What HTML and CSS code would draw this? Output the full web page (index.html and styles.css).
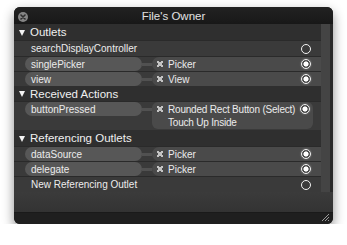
FILE: index.html
```html
<!DOCTYPE html>
<html lang="en">
<head>
    <meta charset="UTF-8">
    <title>File's Owner</title>
    <link rel="stylesheet" href="styles.css">
</head>
<body>
    <div class="window">
        <!-- title bar -->
        <div class="titlebar">
            <svg class="close" width="10" height="10" viewBox="0 0 10 10">
                <circle cx="5" cy="5" r="5" fill="#858585"/>
                <path d="M3 3 L7 7 M7 3 L3 7" stroke="#2e2e2e" stroke-width="1.6" stroke-linecap="round"/>
            </svg>
            <span class="title">File's Owner</span>
        </div>

        <div class="main">
            <div class="list">
                <div class="section first"><span class="tri"></span>Outlets</div>
                <div class="row tall">
                    <span class="name">searchDisplayController</span>
                    <span class="radio empty"></span>
                </div>
                <div class="row">
                    <span class="pill">singlePicker</span><span class="link"></span>
                    <span class="target"><span class="x"></span>Picker<span class="radio full"></span></span>
                </div>
                <div class="row">
                    <span class="pill">view</span><span class="link"></span>
                    <span class="target"><span class="x"></span>View<span class="radio full"></span></span>
                </div>

                <div class="section"><span class="tri"></span>Received Actions</div>
                <div class="row multi">
                    <span class="pill">buttonPressed</span><span class="link"></span>
                    <span class="target box">
                        <span class="x"></span>
                        <span class="lines">
                            <span>Rounded Rect Button (Select)</span>
                            <span>Touch Up Inside</span>
                        </span>
                        <span class="radio full"></span>
                    </span>
                </div>

                <div class="section first"><span class="tri"></span>Referencing Outlets</div>
                <div class="row">
                    <span class="pill">dataSource</span><span class="link"></span>
                    <span class="target"><span class="x"></span>Picker<span class="radio full"></span></span>
                </div>
                <div class="row">
                    <span class="pill">delegate</span><span class="link"></span>
                    <span class="target"><span class="x"></span>Picker<span class="radio full"></span></span>
                </div>
                <div class="row tall">
                    <span class="name">New Referencing Outlet</span>
                    <span class="radio empty"></span>
                </div>
            </div>
            <div class="scroll"></div>
        </div>

        <div class="filler"></div>
        <div class="statusbar">
            <svg class="grip" width="9" height="9" viewBox="0 0 9 9">
                <path d="M1 8 L8 1 M4 8 L8 4 M7 8 L8 7" stroke="#9a9a9a" stroke-width="1"/>
            </svg>
        </div>
    </div>
</body>
</html>
```

FILE: styles.css
```css
body {
    margin: 0;
    background: #fff;
    font-family: 'Liberation Sans', Arial, sans-serif;
    color: #ececec;
}

.window {
    margin: 7px 0 0 14px;
    width: 319px;
    height: 217px;
    border-radius: 6px;
    background: #1d1d1d;
    overflow: hidden;
    box-shadow: 0 5px 12px rgba(0, 0, 0, 0.45);
    display: flex;
    flex-direction: column;
}

/* title bar */
.titlebar {
    height: 17px;
    flex: none;
    position: relative;
    display: flex;
    align-items: center;
    justify-content: center;
    background: linear-gradient(#222, #181818);
}

.close {
    position: absolute;
    left: 4px;
    top: 5px;
}

.title {
    font-size: 11.5px;
    color: #e2e2e2;
}

.main {
    height: 168px;
    flex: none;
    display: flex;
    background: #2a2a2a;
}

.list {
    width: 307px;
    display: flex;
    flex-direction: column;
    background: #303030;
}

.scroll {
    width: 9px;
    background: #444;
}

/* section headers */
.section {
    height: 15px;
    display: flex;
    align-items: center;
    padding-left: 5px;
    font-size: 11.5px;
    background: #2f2f2f;
    color: #f0f0f0;
}

.section.first {
    height: 16px;
}

.tri {
    width: 0;
    height: 0;
    border-left: 3.5px solid transparent;
    border-right: 3.5px solid transparent;
    border-top: 6px solid #f4f4f4;
    margin-right: 5px;
    margin-top: 1px;
}

/* rows */
.row {
    height: 15px;
    box-sizing: border-box;
    border-top: 1px solid #2a2a2a;
    display: flex;
    align-items: center;
    padding-left: 11px;
    font-size: 10px;
    background: #3a3a3a;
    white-space: nowrap;
}

.row.tall {
    height: 16px;
}

.name {
    padding-left: 6px;
    flex: 1;
}

.pill {
    width: 117px;
    height: 14px;
    box-sizing: border-box;
    padding-left: 6px;
    display: flex;
    align-items: center;
    border-radius: 7px;
    background: #575757;
    flex: none;
}

.link {
    width: 10px;
    height: 3px;
    background: #515151;
    flex: none;
}

.target {
    flex: 1;
    height: 14px;
    display: flex;
    align-items: center;
    padding-left: 5px;
    border-radius: 7px 0 0 7px;
    background: #4a4a4a;
}

.x {
    width: 6px;
    height: 6px;
    margin-right: 5px;
    flex: none;
    background:
        linear-gradient(45deg, transparent 38%, #c4c4c4 38%, #c4c4c4 62%, transparent 62%),
        linear-gradient(-45deg, transparent 38%, #c4c4c4 38%, #c4c4c4 62%, transparent 62%);
}

/* two-line action row */
.row.multi {
    height: 29px;
    align-items: flex-start;
}

.row.multi .link {
    margin-top: 6px;
}

.target.box {
    flex: none;
    width: 161px;
    height: 27px;
    box-sizing: border-box;
    border-radius: 6px;
    align-items: flex-start;
    padding: 1px 3px 0 5px;
}

.target.box .x {
    margin-top: 3px;
}

.lines {
    display: flex;
    flex-direction: column;
    line-height: 13px;
    letter-spacing: -0.2px;
}

.target.box .radio {
    margin-right: 0;
    margin-top: 1px;
}

/* connection circles */
.radio {
    width: 10px;
    height: 10px;
    box-sizing: border-box;
    border-radius: 50%;
    border: 1.5px solid #f2f2f2;
    margin-left: auto;
    margin-right: 10px;
    flex: none;
}

.radio.full {
    background: radial-gradient(circle, #fff 0, #fff 2.3px, #4a4a4a 2.8px);
    box-shadow: 0 0 2px rgba(255, 255, 255, 0.4);
}

/* bottom */
.filler {
    height: 20px;
    flex: none;
    background: linear-gradient(#3b3b3b, #333);
    border-bottom: 1px solid #1a1a1a;
}

.statusbar {
    flex: 1;
    background: #1f1f1f;
    display: flex;
    justify-content: flex-end;
    align-items: flex-end;
    padding: 0 3px 2px 0;
}
```
